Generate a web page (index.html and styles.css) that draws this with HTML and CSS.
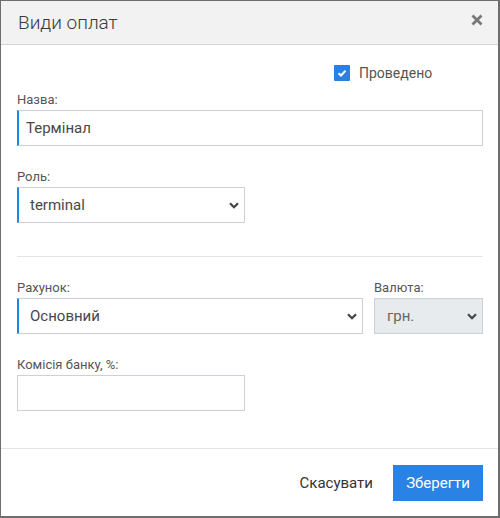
FILE: index.html
```html
<!DOCTYPE html>
<html lang="uk">
<head>
<meta charset="utf-8">
<title>Види оплат</title>
<link rel="stylesheet" href="styles.css">
</head>
<body>
<div class="dialog">
  <div class="header">
    <h1 class="title">Види оплат</h1>
    <button class="close" aria-label="Закрити">
      <svg width="12" height="12" viewBox="0 0 12 12"><path d="M1.5 1.5 L10.5 10.5 M10.5 1.5 L1.5 10.5" stroke="#777" stroke-width="2.8" stroke-linecap="butt"/></svg>
    </button>
  </div>
  <div class="body">
    <label class="check-row">
      <span class="checkbox">
        <svg width="10" height="8" viewBox="0 0 10 8"><path d="M1.5 4.2 L4 6.5 L8.5 1.8" fill="none" stroke="#fff" stroke-width="2"/></svg>
      </span>
      <span class="check-label">Проведено</span>
    </label>

    <div class="field f-name">
      <div class="label">Назва:</div>
      <div class="input accent">Термінал</div>
    </div>

    <div class="field f-role">
      <div class="label">Роль:</div>
      <div class="select accent narrow">
        <span>terminal</span>
        <svg class="chev" width="10" height="7" viewBox="0 0 10 7"><path d="M1 1.3 L5 5.3 L9 1.3" fill="none" stroke="#444" stroke-width="2.2"/></svg>
      </div>
    </div>

    <div class="sep"></div>

    <div class="row">
      <div class="field">
        <div class="label">Рахунок:</div>
        <div class="select accent">
          <span>Основний</span>
          <svg class="chev" width="10" height="7" viewBox="0 0 10 7"><path d="M1 1.3 L5 5.3 L9 1.3" fill="none" stroke="#444" stroke-width="2.2"/></svg>
        </div>
      </div>
      <div class="field">
        <div class="label">Валюта:</div>
        <div class="select disabled">
          <span>грн.</span>
          <svg class="chev" width="10" height="7" viewBox="0 0 10 7"><path d="M1 1.3 L5 5.3 L9 1.3" fill="none" stroke="#444" stroke-width="2.2"/></svg>
        </div>
      </div>
    </div>

    <div class="field f-fee">
      <div class="label">Комісія банку, %:</div>
      <div class="input narrow"></div>
    </div>
  </div>
  <div class="footer">
    <button class="btn-cancel">Скасувати</button>
    <button class="btn-save">Зберегти</button>
  </div>
</div>
</body>
</html>
```

FILE: styles.css
```css
* { box-sizing: border-box; }
html, body { margin: 0; padding: 0; background: #fff; }
body { font-family: Roboto, "Noto Sans", "Liberation Sans", sans-serif; }

.dialog {
  width: 500px;
  height: 518px;
  border: 1px solid #6e6e6e;
  border-right-width: 2px;
  border-bottom-width: 2px;
  background: #fff;
  display: flex;
  flex-direction: column;
}

.header {
  height: 44px;
  background: #f2f2f2;
  border-bottom: 1px solid #d4d4d4;
  display: flex;
  align-items: center;
  justify-content: space-between;
  padding: 0 15px 0 17px;
}
.title {
  margin: 0;
  font-size: 19px;
  font-weight: 300;
  line-height: 24px;
  color: #3a3a3a;
}
.close {
  border: 0;
  background: transparent;
  padding: 0;
  margin: -6px 0 0 0;
  width: 12px;
  height: 12px;
  display: flex;
}

.body {
  height: 403px;
  padding: 20px 15px 0 16px;
  display: flex;
  flex-direction: column;
}

.check-row {
  display: flex;
  align-items: center;
  height: 16px;
  margin-left: 317px;
}
.checkbox {
  width: 16px;
  height: 16px;
  background: #2a7fe2;
  border-radius: 1px;
  display: flex;
  align-items: center;
  justify-content: center;
}
.check-label {
  margin-left: 9px;
  font-size: 14px;
  color: #555;
  line-height: 16px;
}

.label {
  font-size: 13px;
  line-height: 16px;
  color: #555;
  margin-bottom: 2px;
}

.f-name { margin-top: 11px; }
.f-role { margin-top: 23px; }
.f-fee { margin-top: 23px; }

.input, .select {
  height: 36px;
  border: 1px solid #cdd1d7;
  background: #fff;
  font-size: 15px;
  color: #484848;
  display: flex;
  align-items: center;
}
.input { padding-left: 6px; }
.input.accent { padding-left: 7px; }
.select {
  justify-content: space-between;
  padding: 0 5px 0 12px;
}
.accent { border-left: 2px solid #1e87e6; }
.select.accent { padding-left: 11px; }
.narrow { width: 228px; }
.select.disabled { background: #e8ebee; color: #666; }
.chev { display: block; margin-top: 1px; }

.sep {
  height: 1px;
  background: #e4e4e4;
  margin-top: 33px;
}

.row {
  margin-top: 23px;
  display: grid;
  grid-template-columns: 346px 109px;
  column-gap: 11px;
}

.footer {
  flex: 1;
  border-top: 1px solid #e4e4e4;
  display: flex;
  justify-content: flex-end;
  align-items: flex-start;
  padding: 16px 15px 0 0;
}
.btn-cancel {
  border: 0;
  background: transparent;
  font-family: inherit;
  font-size: 15px;
  color: #333;
  height: 36px;
  padding: 0 12px;
  margin-right: 8px;
}
.btn-save {
  border: 0;
  background: #2a82e4;
  color: #fff;
  font-family: inherit;
  font-size: 15px;
  height: 36px;
  width: 90px;
  padding: 0;
}
```
